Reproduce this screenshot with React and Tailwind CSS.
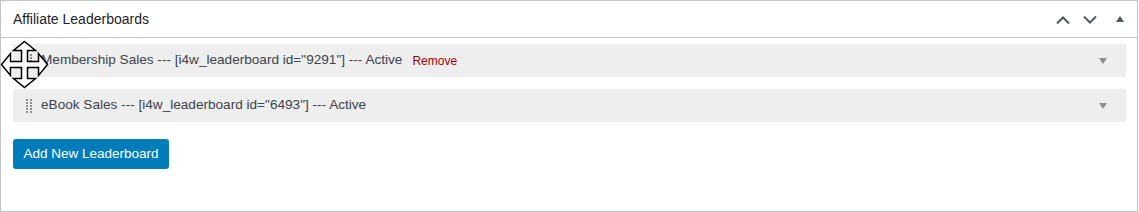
const leaderboards = [
  { name: "Membership Sales", id: "9291", status: "Active", hovered: true },
  { name: "eBook Sales", id: "6493", status: "Active", hovered: false },
];

const DragHandle = () => (
  <svg width="6" height="14" viewBox="0 0 6 14" className="shrink-0">
    {[0, 3, 6, 9, 12].map((y) => (
      <g key={y} fill="#8c8f94">
        <rect x="0" y={y} width="2" height="2" />
        <rect x="4" y={y} width="2" height="2" />
      </g>
    ))}
  </svg>
);

const Caret = ({ up, color }) => (
  <svg width="8" height="6" viewBox="0 0 8 6">
    <path d={up ? "M0 6 L4 0 L8 6 Z" : "M0 0 L8 0 L4 6 Z"} fill={color} />
  </svg>
);

const Chevron = ({ up }) => (
  <svg width="14" height="8" viewBox="0 0 14 8">
    <path
      d={up ? "M1 7.5 L7 1.5 L13 7.5" : "M1 0.5 L7 6.5 L13 0.5"}
      fill="none"
      stroke="#50575e"
      strokeWidth="2"
    />
  </svg>
);

// four-way move cursor that sits over the first row
const MoveCursor = () => (
  <svg
    width="50"
    height="50"
    viewBox="0 0 50 50"
    className="absolute left-0 top-[40px] pointer-events-none"
  >
    <polygon
      transform="translate(24.5 24.5)"
      points="0,-23 11,-14 3,-14 3,-3 14,-3 14,-11 23,0 14,11 14,3 3,3 3,14 11,14 0,23 -11,14 -3,14 -3,3 -14,3 -14,11 -23,0 -14,-11 -14,-3 -3,-3 -3,-14 -11,-14"
      fill="#ffffff"
      stroke="#000000"
      strokeWidth="1.5"
      strokeLinejoin="miter"
    />
  </svg>
);

const Row = ({ item }) => (
  <div className="h-[33px] bg-[#eeeeee] flex items-center pl-[13px] pr-[19px]">
    <DragHandle />
    <span className="ml-[9px] text-[13.6px] text-[#3c434a] whitespace-nowrap">
      {item.name} --- [i4w_leaderboard id="{item.id}"] --- {item.status}
    </span>
    {item.hovered && (
      <a className="ml-[10px] text-[12px] text-[#a00] cursor-pointer">Remove</a>
    )}
    <div className="ml-auto flex items-center">
      <Caret color="#8c8f94" />
    </div>
  </div>
);

export default function App() {
  return (
    <div
      className="relative w-[1139px] h-[212px] bg-white"
      style={{ fontFamily: '"Liberation Sans", Arial, sans-serif' }}
    >
      <div className="w-[1138px] h-[212px] border border-[#c3c4c7] flex flex-col">
        <div className="h-[37px] shrink-0 border-b border-[#c3c4c7] flex items-center pl-[12px] pr-[13px]">
          <h2 className="text-[14px] text-[#1d2327]">Affiliate Leaderboards</h2>
          <div className="ml-auto flex items-center">
            <button className="w-[14px] flex justify-center mt-[1px]">
              <Chevron up />
            </button>
            <button className="ml-[13px] w-[14px] flex justify-center mt-[1px]">
              <Chevron />
            </button>
            <button className="ml-[19px] flex justify-center">
              <Caret up color="#50575e" />
            </button>
          </div>
        </div>
        <div className="pl-[12px] pr-[11px] pt-[6px] flex flex-col gap-[12px]">
          {leaderboards.map((item) => (
            <Row key={item.id} item={item} />
          ))}
          <div className="pt-[5px]">
            <button className="w-[156px] h-[30px] rounded-[3px] bg-[#007cba] text-white text-[13.5px] flex items-center justify-center">
              Add New Leaderboard
            </button>
          </div>
        </div>
      </div>
      <MoveCursor />
    </div>
  );
}
